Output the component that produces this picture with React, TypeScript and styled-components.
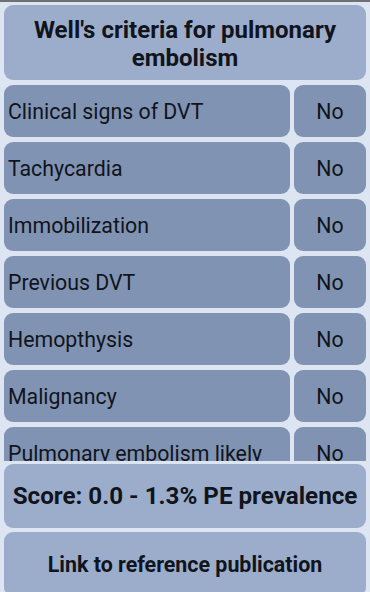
import styled, { createGlobalStyle } from "styled-components";

const GlobalStyle = createGlobalStyle`
	html, body {
		margin: 0;
		padding: 0;
		background: #dde4f2;
	}
	* {
		box-sizing: border-box;
	}
`;

const Screen = styled.div`
	width: 370px;
	height: 592px;
	overflow: hidden;
	display: flex;
	flex-direction: column;
	background: #dde4f2;
	font-family: Roboto, "Noto Sans", sans-serif;
	color: #10141c;
`;

const TopEdge = styled.div`
	height: 2px;
	background: #6f7075;
	flex-shrink: 0;
`;

const Card = styled.div<{ $tone: "light" | "dark" }>`
	background: ${(p) => (p.$tone === "light" ? "#9badcb" : "#8193b3")};
	border-radius: 9px;
	display: flex;
	align-items: center;
`;

const TitleCard = styled(Card)`
	margin: 3px 4px 0;
	height: 75px;
	justify-content: center;
	flex-shrink: 0;
`;

const Title = styled.h1`
	margin: 0;
	padding-top: 2px;
	font-size: 24px;
	line-height: 28px;
	font-weight: 700;
	text-align: center;
`;

const List = styled.div`
	margin: 5px 4px 0;
	height: 376px;
	overflow: hidden;
	display: flex;
	flex-direction: column;
	gap: 5px;
	flex-shrink: 0;
`;

const Row = styled.div`
	display: grid;
	grid-template-columns: 1fr 72px;
	gap: 4px;
	height: 52px;
	flex-shrink: 0;
`;

const Label = styled(Card)`
	padding-left: 4px;
	font-size: 21.3px;
	white-space: nowrap;
	overflow: hidden;
`;

const Answer = styled(Card)`
	justify-content: center;
	font-size: 21.3px;
`;

const Footer = styled.div`
	margin: 3px 4px 0;
	display: flex;
	flex-direction: column;
	gap: 4px;
`;

const FooterCard = styled(Card)`
	height: 64px;
	justify-content: center;
	font-weight: 700;
	flex-shrink: 0;
	white-space: nowrap;
`;

const Score = styled(FooterCard)`
	font-size: 24.2px;
`;

const LinkButton = styled(FooterCard)`
	font-size: 21.4px;
	cursor: pointer;
`;

const criteria = [
	"Clinical signs of DVT",
	"Tachycardia",
	"Immobilization",
	"Previous DVT",
	"Hemopthysis",
	"Malignancy",
	"Pulmonary embolism likely",
];

export default function App() {
	return (
		<>
			<GlobalStyle />
			<Screen>
				<TopEdge />
				<TitleCard $tone="light">
					<Title>
						Well's criteria for pulmonary
						<br />
						embolism
					</Title>
				</TitleCard>
				<List>
					{criteria.map((c) => (
						<Row key={c}>
							<Label $tone="dark">{c}</Label>
							<Answer $tone="dark">No</Answer>
						</Row>
					))}
				</List>
				<Footer>
					<Score $tone="light">Score: 0.0 - 1.3% PE prevalence</Score>
					<LinkButton $tone="light">Link to reference publication</LinkButton>
				</Footer>
			</Screen>
		</>
	);
}
